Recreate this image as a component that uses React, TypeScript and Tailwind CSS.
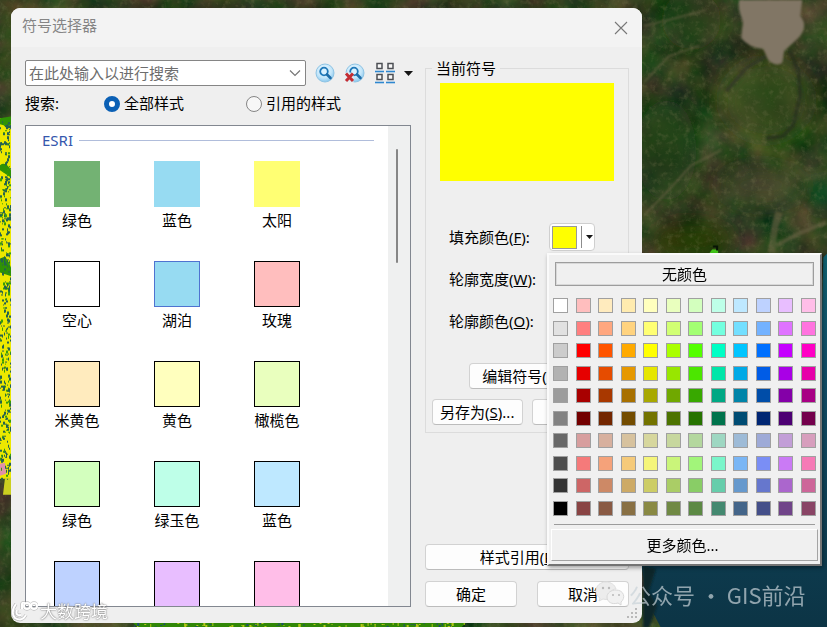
import React from "react";

const ui = "font-['Noto_Sans','Noto_Sans_CJK_SC',sans-serif]";

const styles = [
  { name: "绿色", fill: "#73b273", line: "#73b273" },
  { name: "蓝色", fill: "#97dbf2", line: "#97dbf2" },
  { name: "太阳", fill: "#ffff73", line: "#ffff73" },
  { name: "空心", fill: "#ffffff", line: "#000000" },
  { name: "湖泊", fill: "#97dbf2", line: "#4f73d0" },
  { name: "玫瑰", fill: "#ffbebe", line: "#000000" },
  { name: "米黄色", fill: "#ffebbe", line: "#000000" },
  { name: "黄色", fill: "#ffffbe", line: "#000000" },
  { name: "橄榄色", fill: "#e9ffbe", line: "#000000" },
  { name: "绿色", fill: "#d3ffbe", line: "#000000" },
  { name: "绿玉色", fill: "#beffe8", line: "#000000" },
  { name: "蓝色", fill: "#bee8ff", line: "#000000" },
  { name: "", fill: "#bed2ff", line: "#000000" },
  { name: "", fill: "#e8beff", line: "#000000" },
  { name: "", fill: "#ffbee8", line: "#000000" },
];

const palette = [
  "#ffffff #ffbebe #ffebbe #ffebaf #ffffbe #e9ffbe #d3ffbe #beffe8 #bee8ff #bed2ff #e8beff #ffbee8",
  "#e1e1e1 #ff7f7f #ffa77f #ffd37f #ffff73 #d1ff73 #a3ff73 #73ffdf #73dfff #73b2ff #df73ff #ff73df",
  "#cccccc #ff0000 #ff5500 #ffaa00 #ffff00 #aaff00 #55ff00 #00ffc5 #00c5ff #0070ff #c500ff #ff00c5",
  "#b2b2b2 #e60000 #e64c00 #e69800 #e6e600 #98e600 #4ce600 #00e6a9 #00a9e6 #005ce6 #a900e6 #e600a9",
  "#9c9c9c #a80000 #a83800 #a87000 #a8a800 #70a800 #38a800 #00a884 #0084a8 #004da8 #8400a8 #a80084",
  "#828282 #730000 #732600 #734c00 #737300 #4c7300 #267300 #00734c #004c73 #002673 #4c0073 #73004c",
  "#686868 #d79e9e #d7b09e #d7c29e #d7d79e #c7d79e #b4d79e #9ed7c2 #9ebbd7 #9eaad7 #c29ed7 #d79ebd",
  "#4e4e4e #f57a7a #f5a27a #f5ca7a #f5f57a #caf57a #a2f57a #7af5ca #7ab6f5 #7a8ef5 #ca7af5 #f57ab6",
  "#343434 #cd6666 #cd8966 #cdaa66 #cdcd66 #aacd66 #89cd66 #66cdab #6699cd #6677cd #ab66cd #cd6699",
  "#000000 #894444 #895a44 #897044 #898944 #708944 #5c8944 #448970 #446589 #444f89 #704489 #894465",
].flatMap((row) => row.split(" "));

function specks(count: number, w: number, h: number, seed: number) {
  let s = seed;
  const next = () => {
    s = (s * 16807) % 2147483647;
    return s / 2147483647;
  };
  return Array.from({ length: count }, () => ({
    x: Math.floor(next() * w),
    y: Math.floor(next() * h),
    w: 1 + Math.floor(next() * 2),
    h: 1 + Math.floor(next() * 3),
    c: next(),
  }));
}

function MapCanvas() {
  return (
    <svg
      className="absolute inset-0 h-full w-full"
      viewBox="0 0 827 627"
      preserveAspectRatio="xMinYMin slice"
      aria-hidden="true"
    >
      <defs>
        <filter id="terrain" x="0" y="0" width="100%" height="100%" colorInterpolationFilters="sRGB">
          <feTurbulence type="fractalNoise" baseFrequency="0.025" numOctaves="5" seed="8" />
          <feColorMatrix values="0.5 0 0 0 -0.04  0.15 0.3 0 0 0.03  0.2 0 0.1 0 -0.02  0 0 0 0 1" />
        </filter>
        <filter id="grain" x="0" y="0" width="100%" height="100%" colorInterpolationFilters="sRGB">
          <feTurbulence type="fractalNoise" baseFrequency="0.18" numOctaves="4" seed="3" />
          <feColorMatrix values="0 0 0 0 0.45  0 0 0 0 0.45  0 0 0 0 0.3  2.6 0 0 0 -1.3" />
        </filter>
        <filter id="soft" x="-20%" y="-20%" width="140%" height="140%">
          <feGaussianBlur stdDeviation="9" />
        </filter>
        <filter id="edge">
          <feGaussianBlur stdDeviation="1" />
        </filter>
        <linearGradient id="sea" x1="0" y1="0" x2="0" y2="1">
          <stop offset="0" stopColor="#0f6170" />
          <stop offset="0.3" stopColor="#104d66" />
          <stop offset="1" stopColor="#0c3445" />
        </linearGradient>
      </defs>
      <rect width="827" height="627" fill="#30431f" />
      <rect width="827" height="627" filter="url(#terrain)" opacity="0.85" />
      <g filter="url(#soft)">
        <ellipse cx="690" cy="20" rx="30" ry="30" fill="#123d0c" opacity="0.6" />
        <ellipse cx="665" cy="150" rx="30" ry="50" fill="#163a18" opacity="0.6" />
        <ellipse cx="765" cy="100" rx="45" ry="40" fill="#37501a" opacity="0.7" />
        <ellipse cx="760" cy="185" rx="40" ry="18" fill="#505434" opacity="0.6" />
        <ellipse cx="690" cy="240" rx="40" ry="18" fill="#263a08" opacity="0.8" />
        <ellipse cx="822" cy="195" rx="10" ry="16" fill="#00552c" opacity="0.8" />
      </g>
      <rect width="827" height="627" filter="url(#grain)" opacity="0.35" />
      <g fill="none" stroke="#6e6547" strokeWidth="2" opacity="0.55" filter="url(#edge)">
        <path d="M643 26L675 18L705 10M643 82L668 56L698 46" />
        <path d="M725 91L745 68L765 56" />
        <path d="M643 215L672 185L690 165L720 150" />
        <path d="M770 252L774 225L778 212" strokeWidth="7" />
        <path d="M775 245L800 232L825 222" strokeWidth="4" />
      </g>
      <path
        d="M788 50L797 70L799 95L792 125L782 136L765 138M725 91L745 68L765 56"
        fill="none"
        stroke="#232c1e"
        strokeWidth="4"
        opacity="0.6"
        filter="url(#edge)"
      />
      <path
        d="M738 0C736 16 744 18 741 28L740 38Q748 48 762 49L767 60Q774 67 781 63L783 51L796 39Q808 27 799 16L801 0Z"
        fill="#817665"
        filter="url(#edge)"
      />
      <path d="M822 257L827 252V627H660L646 600L640 560H815Z" fill="url(#sea)" />
      <path d="M642 565L655 568L648 590L656 605L648 627H642Z" fill="#0b2529" filter="url(#edge)" />
      <path d="M708 253L711 249H717V253Z" fill="#42c619" />
      <path d="M712 245h5v5h-2v-3h-3z" fill="#071305" />
      <rect y="118" width="12" height="360" fill="#ece800" />
      <path d="M0 118L12 116V124L7 126L0 124ZM0 165Q6 160 12 172V178L0 170ZM0 258L5 256L9 262L12 270V276L0 272Z" fill="#2f9305" />
      <path d="M6 283h6M3 288h6v7" stroke="#36a000" strokeWidth="2" fill="none" />
      <path d="M0 463L5 462L6 473L0 475Z" fill="#df91a8" />
      <path d="M5 477L3 494H12V477Z" fill="#cbd020" />
      {specks(420, 11, 360, 71).map((p, i) => (
        <rect key={i} x={p.x} y={p.y + 120} width={p.w} height={p.h} fill={p.c > 0.75 ? "#399d08" : "#25634f"} />
      ))}
      <path d="M133 622H465L460 627H138Z" fill="#318707" />
      {specks(110, 330, 5, 19).map((p, i) => (
        <rect key={i} x={p.x + 134} y={p.y + 622} width={p.w} height={p.h} fill={p.c > 0.3 ? "#b4c718" : "#1c4e6e"} />
      ))}
    </svg>
  );
}

function Lens({ clear = false }: { clear?: boolean }) {
  return (
    <svg className="h-[22px] w-[22px]" viewBox="0 0 22 22" aria-hidden="true">
      <defs>
        <radialGradient id={clear ? "orbClear" : "orb"} cx="0.45" cy="0.35" r="0.7">
          <stop offset="0" stopColor="#f2fbff" />
          <stop offset="0.6" stopColor="#c3e6fa" />
          <stop offset="1" stopColor="#7dc0ea" />
        </radialGradient>
      </defs>
      <circle cx="11" cy="11" r="9" fill={clear ? "url(#orbClear)" : "url(#orb)"} stroke="#8fc4e4" />
      <circle cx="10" cy="9.5" r="3.8" fill="#d9f1ff" stroke="#1f78b8" strokeWidth="1.8" />
      <path d="M13 12.5L16.5 16" stroke="#1c6ca8" strokeWidth="2.6" strokeLinecap="round" />
      {clear && (
        <g>
          <path d="M1 10.5h8.5v9.5H1z" fill="#e5eff5" opacity="0.8" />
          <path d="M2 11.5L9 19M9 11.5L2 19" stroke="#c42d33" strokeWidth="3" />
        </g>
      )}
    </svg>
  );
}

function ViewIcon() {
  return (
    <svg className="h-[22px] w-[22px]" viewBox="0 0 22 22" aria-hidden="true">
      {[
        [1, 1],
        [12, 1],
        [1, 12],
        [12, 12],
      ].map(([x, y]) => (
        <g key={`${x}-${y}`}>
          <rect x={x + 2} y={y + 0.5} width="5" height="5" fill="#f8f8f8" stroke="#4c4f54" strokeWidth="1.5" />
          <path d={`M${x} ${y + 8.5}h9`} stroke="#2e87cf" strokeWidth="1.6" />
        </g>
      ))}
    </svg>
  );
}

function Triangle({ className }: { className: string }) {
  return (
    <svg className={className} viewBox="0 0 10 5" preserveAspectRatio="none" aria-hidden="true">
      <path d="M0 0H10L5 5Z" fill="#151515" />
    </svg>
  );
}

function PushButton({ className = "", children, label }: { className?: string; children?: React.ReactNode; label?: string }) {
  return (
    <button
      type="button"
      aria-label={label}
      className={`h-[26px] whitespace-nowrap rounded-[4px] border border-[#d2d2d2] border-b-[#bcbcbc] bg-[#fdfdfd] text-center leading-6 ${className}`}
    >
      {children}
    </button>
  );
}

function ColorMenu() {
  return (
    <div
      role="menu"
      aria-label="颜色"
      className="absolute -left-0.5 top-[30px] z-10 flex w-[275px] flex-col border-2 border-b-[#747474] border-l-[#fafafa] border-r-[#747474] border-t-[#fafafa] bg-[#f0f0f0] px-0.5 pb-[3px] pt-[7px] shadow-[1px_2px_4px_rgba(0,0,0,0.35)]"
    >
      <button type="button" role="menuitem" className="mx-1 h-6 border border-[#9d9d9d] leading-[21px] outline outline-1 -outline-offset-2 outline-[#d8d8d8]">
        无颜色
      </button>
      <div className="mx-0.5 mt-3 grid h-[218px] grid-cols-[repeat(12,15px)] content-between justify-between">
        {palette.map((c, i) => (
          <button key={i} type="button" aria-label={c} className="h-[15px] w-[15px] border border-[#a0a0a0]" style={{ backgroundColor: c }} />
        ))}
      </div>
      <hr className="mx-[3px] mb-1 mt-2 border-t border-[#9c9c9c]" />
      <button
        type="button"
        role="menuitem"
        className="h-8 border border-b-[#a4a4a4] border-l-white border-r-[#a4a4a4] border-t-white pr-1 leading-[29px]"
      >
        更多颜色...
      </button>
    </div>
  );
}

function StyleList() {
  return (
    <div className="flex h-[482px] border border-[#828790] bg-white">
      <div className="min-w-0 flex-1 overflow-hidden">
        <div className="flex h-7 items-center gap-1.5 pl-4 pr-3.5">
          <h2 className="text-[#3557ad]">ESRI</h2>
          <span className="h-px flex-1 bg-[#b0bddb]" />
        </div>
        <ul className="grid auto-rows-[100px] grid-cols-[repeat(3,100px)] pl-px pt-[7px]">
          {styles.map((s, i) => (
            <li key={i} className="flex flex-col items-center gap-[3px]">
              <span className="h-[46px] w-[46px] border" style={{ backgroundColor: s.fill, borderColor: s.line }} />
              <span className="leading-5">{s.name}</span>
            </li>
          ))}
        </ul>
      </div>
      <div className="flex w-[22px] justify-center bg-[#eff0f0] pr-1 pt-[23px]">
        <span className="h-[114px] w-0.5 rounded bg-[#868686]" />
      </div>
    </div>
  );
}

function CurrentSymbol() {
  return (
    <fieldset className="border border-[#dcdcdc] px-1.5 pb-[7px]">
      <legend className="px-1 leading-4">当前符号</legend>
      <div className="mx-2 mt-[7px] h-[98px] bg-[#ffff00]" />
      <div className="mt-[42px] grid grid-cols-[100px_1fr] gap-y-3.5 pl-[17px] leading-7">
        <label htmlFor="fill">
          填充颜色(<u>F</u>):
        </label>
        <div className="relative">
          <button id="fill" type="button" className="flex h-7 w-[46px] items-center gap-1 rounded-[4px] border border-[#cfcfcf] bg-white pl-0.5">
            <span className="h-[23px] w-[25px] shrink-0 border border-[#999] bg-[#ffff00]" />
            <span className="h-[22px] w-px shrink-0 bg-[#8c8c8c]" />
            <Triangle className="h-1 w-[7px] shrink-0" />
          </button>
          <ColorMenu />
        </div>
        <label htmlFor="width">
          轮廓宽度(<u>W</u>):
        </label>
        <input id="width" type="text" className="h-7 w-[46px] border border-[#cfcfcf] bg-white" />
        <label htmlFor="outline">
          轮廓颜色(<u>O</u>):
        </label>
        <button id="outline" type="button" className="h-7 w-[46px] rounded-[4px] border border-[#cfcfcf] bg-white" />
      </div>
      <div className="mt-7 flex justify-center">
        <PushButton className="w-[116px]">
          编辑符号(<u>E</u>)...
        </PushButton>
      </div>
      <div className="mt-2.5 flex gap-[9px]">
        <PushButton className="flex-1">
          另存为(<u>S</u>)...
        </PushButton>
        <PushButton className="flex-1" label="重置" />
      </div>
    </fieldset>
  );
}

function Radio({ label, checked = false, className = "" }: { label: string; checked?: boolean; className?: string }) {
  return (
    <label className={`flex items-center gap-1 whitespace-nowrap ${className}`}>
      <input
        type="radio"
        name="scope"
        defaultChecked={checked}
        className="h-4 w-4 shrink-0 appearance-none rounded-full border border-[#858585] bg-[#f7f7f7] checked:border-[5px] checked:border-[#0b60b5] checked:bg-white"
      />
      {label}
    </label>
  );
}

function Grip() {
  return (
    <svg className="absolute bottom-1 right-1 h-3 w-3" viewBox="0 0 12 12" aria-hidden="true">
      <path d="M9 1h2v2h-2zM5 5h2v2h-2zM9 5h2v2h-2zM1 9h2v2h-2zM5 9h2v2h-2zM9 9h2v2h-2z" fill="#b9b9b9" />
    </svg>
  );
}

export default function App() {
  return (
    <div className={`relative min-h-screen overflow-hidden bg-[#30431f] pb-[5px] pl-[11px] pr-2 pt-2 text-[15px] text-black ${ui}`}>
      <MapCanvas />
      <main className="relative w-full max-w-[631px] rounded-[9px] bg-[#efefef]">
        <header className="flex h-[39px] items-center justify-between rounded-t-[9px] bg-[#f3f3f3] pl-[11px] pr-3.5">
          <h1 className="pb-1 text-[#858585]">符号选择器</h1>
          <button type="button" aria-label="关闭">
            <svg className="h-3.5 w-3.5" viewBox="0 0 14 14" aria-hidden="true">
              <path d="M1 1L13 13M13 1L1 13" stroke="#777" strokeWidth="1.1" />
            </svg>
          </button>
        </header>
        <div className="flex gap-3.5 pb-4 pl-3.5 pr-[13px] pt-[13px]">
          <section className="min-w-0 flex-1">
            <div className="flex items-center gap-2">
              <div className="flex h-[26px] w-[281px] shrink-0 items-center rounded-[2px] border border-[#858585] bg-white pr-1">
                <input
                  type="text"
                  aria-label="搜索符号"
                  placeholder="在此处输入以进行搜索"
                  className="h-full min-w-0 flex-1 bg-transparent pb-px pl-[3px] outline-none placeholder:text-[#6d6d6d]"
                />
                <button type="button" aria-label="展开">
                  <svg className="h-3 w-3" viewBox="0 0 12 12" aria-hidden="true">
                    <path d="M1 3.5L6 8.5L11 3.5" fill="none" stroke="#777" strokeWidth="1.2" />
                  </svg>
                </button>
              </div>
              <button type="button" aria-label="查找" className="shrink-0">
                <Lens />
              </button>
              <button type="button" aria-label="清除" className="shrink-0">
                <Lens clear />
              </button>
              <button type="button" aria-label="视图" className="shrink-0">
                <ViewIcon />
              </button>
              <button type="button" aria-label="视图选项" className="shrink-0">
                <Triangle className="h-[5px] w-[9px]" />
              </button>
            </div>
            <div className="flex h-[39px] items-center pb-1">
              <span className="w-[79px]">搜索:</span>
              <Radio label="全部样式" checked className="w-[142px]" />
              <Radio label="引用的样式" />
            </div>
            <StyleList />
          </section>
          <section className="flex w-[204px] shrink-0 flex-col">
            <CurrentSymbol />
            <PushButton className="mt-auto w-full pr-1">
              样式引用(<u>R</u>)...
            </PushButton>
            <div className="mt-[11px] flex justify-between">
              <PushButton className="w-[92px]">确定</PushButton>
              <PushButton className="w-[92px]">取消</PushButton>
            </div>
          </section>
        </div>
        <Grip />
      </main>

      <div className="pointer-events-none absolute bottom-1 left-2.5 z-20 flex items-center gap-0.5 text-[17px] leading-6 text-white [text-shadow:0_0_2px_#777,0_0_1px_#777]">
        <svg className="h-6 w-7" viewBox="0 0 28 24" fill="none" aria-hidden="true">
          <g stroke="#999" strokeWidth="3.4" opacity="0.6">
            <path d="M6 4Q0 12 5 18Q12 22 16 15M7 10Q5 16 11 15M12 9V4Q12 2 15 3" />
            <circle cx="17" cy="6" r="3" />
            <circle cx="24" cy="6" r="3" />
          </g>
          <g stroke="white" strokeWidth="2">
            <path d="M6 4Q0 12 5 18Q12 22 16 15M7 10Q5 16 11 15M12 9V4Q12 2 15 3" />
            <circle cx="17" cy="6" r="3" />
            <circle cx="24" cy="6" r="3" />
          </g>
        </svg>
        <span>大数跨境</span>
      </div>

      <div className="pointer-events-none absolute bottom-[18px] left-[595px] z-20 flex items-center gap-1 whitespace-nowrap font-['Noto_Sans_CJK_SC',sans-serif] text-[22px] leading-8 text-[#c9d3d8]/70">
        <svg className="h-[26px] w-[30px]" viewBox="0 0 30 26" aria-hidden="true">
          <path d="M11 1C5 1 1 5 1 10C1 13 2 15 5 17L4 20L8 18Q11 19 14 18C12 12 17 8 21 8C20 4 16 1 11 1Z" fill="#ececec" stroke="#dedede" />
          <path d="M21 9C16 9 12 12 12 16C12 21 17 24 23 22L26 24L26 21C31 17 29 9 21 9Z" fill="#f1f1f1" stroke="#d8d8d8" />
          <g fill="#b9b9b9">
            <circle cx="8" cy="7" r="1.2" />
            <circle cx="14" cy="7" r="1.2" />
            <circle cx="18" cy="14" r="1" />
            <circle cx="24" cy="14" r="1" />
          </g>
        </svg>
        <span>公众号 · GIS前沿</span>
      </div>
    </div>
  );
}
